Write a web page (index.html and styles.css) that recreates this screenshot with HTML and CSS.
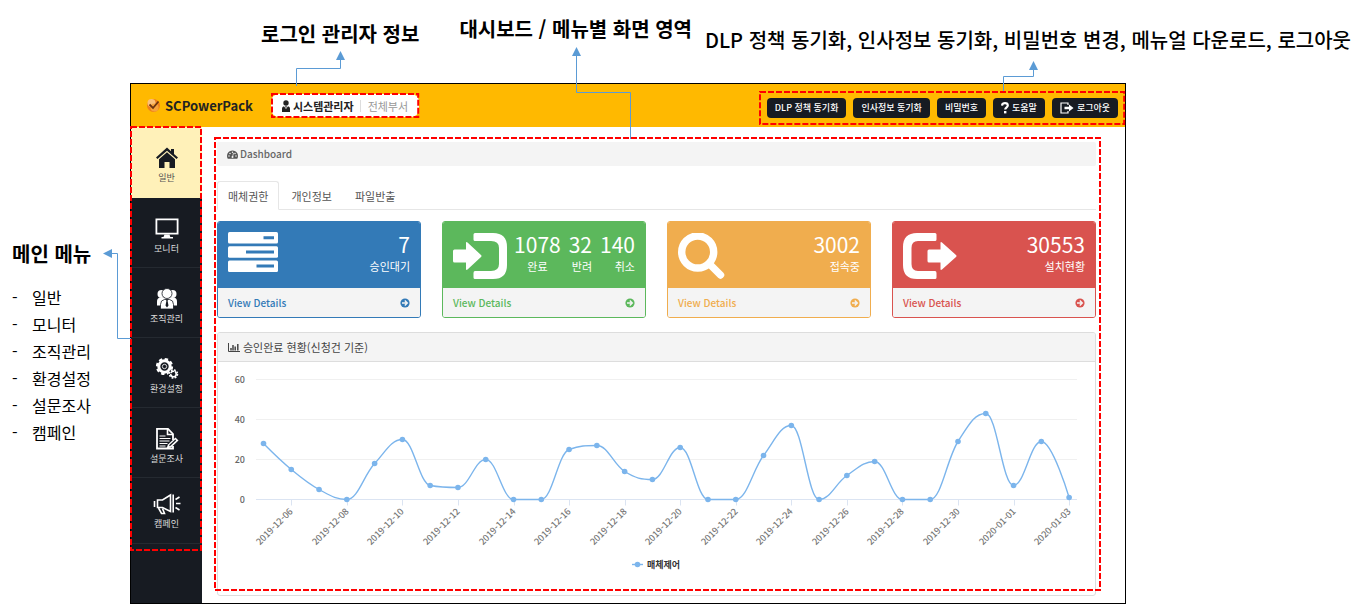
FILE: index.html
```html
<!DOCTYPE html>
<html lang="ko">
<head>
<meta charset="utf-8">
<meta name="viewport" content="width=device-width, initial-scale=1">
<title>SCPowerPack Dashboard</title>
<link rel="stylesheet" href="styles.css">
</head>
<body>
<div class="guide">
  <div class="captions">
    <h2 class="caption caption-login">로그인 관리자 정보</h2>
    <h2 class="caption caption-screen">대시보드 / 메뉴별 화면 영역</h2>
    <h2 class="caption caption-tools">DLP 정책 동기화, 인사정보 동기화, 비밀번호 변경, 메뉴얼 다운로드, 로그아웃</h2>
  </div>

  <aside class="notes">
    <h2 class="caption">메인 메뉴</h2>
    <ul class="note-list">
      <li>일반</li><li>모니터</li><li>조직관리</li><li>환경설정</li><li>설문조사</li><li>캠페인</li>
    </ul>
  </aside>

  <div class="app">
    <header class="topbar">
      <div class="brand">
        <svg class="brand-icon" viewBox="0 0 15 15" aria-hidden="true">
          <circle cx="7.5" cy="7.5" r="6.5" fill="#f07f1a"/>
          <circle cx="5.5" cy="5" r="4" fill="#fbc07a"/>
          <circle cx="8.5" cy="9.500" r="4" fill="#f6a33c"/>
          <path d="M3.5 6.5 7 10 12.500 3.500" fill="none" stroke="#6b3310" stroke-width="1.8"/>
        </svg>
        <span>SCPowerPack</span>
      </div>
      <div class="account">
        <svg class="account-icon" viewBox="0 0 8 12" aria-hidden="true"><circle cx="4" cy="3" r="2.7"/><path d="M0 12V8.500Q0 6.500 2 6.200L4 9 6 6.200Q8 6.500 8 8.500V12ZM3.300 6h1.400L4.300 8h-.6Z"/></svg>
        <strong>시스템관리자</strong>
        <span class="department">전체부서</span>
        <svg class="frame frame-account" aria-hidden="true"><rect/></svg>
        <svg class="link link-account" viewBox="0 0 54 36" aria-hidden="true"><path class="wire" d="M5.500 35V17.500H49.500V8"/><path class="tip" d="M49.500 0 54 9H45Z"/></svg>
      </div>
      <div class="tools">
        <button type="button">DLP 정책 동기화</button>
        <button type="button">인사정보 동기화</button>
        <button type="button">비밀번호</button>
        <button type="button"><svg width="8" height="12" viewBox="0 0 8 12" aria-hidden="true"><path d="M1 3.600C1.200 1.800 2.500 1.200 4 1.200c1.600 0 2.800.9 2.800 2.300C6.800 5.300 4.200 5.300 4.200 7.600" fill="none" stroke="#fff" stroke-width="2.200"/><rect x="3" y="9" width="2.400" height="2.400" fill="#fff"/></svg>도움말</button>
        <button type="button"><svg width="14" height="12" viewBox="0 0 14 12" aria-hidden="true"><path d="M8 3V1H1v10h7V9" fill="none" stroke="#fff" stroke-width="1.200"/><path d="M4.500 4.800H9V2.500L13.500 6 9 9.500V7.200H4.500Z" fill="#fff"/></svg>로그아웃</button>
        <svg class="frame frame-tools" aria-hidden="true"><rect/></svg>
        <svg class="link link-tools" viewBox="0 0 40 30" aria-hidden="true"><path class="wire" d="M5.500 30V15.500H35.500V8"/><path class="tip" d="M35.500 0 40 9H31Z"/></svg>
      </div>
    </header>

    <nav class="sidebar" aria-label="메인 메뉴">
      <a href="#general" class="nav-item active">
        <svg viewBox="0 0 24 24" aria-hidden="true"><path d="M12 1.500 1 11.500 2.500 13 12 4.800 21.500 13l1.500-1.500-4-3.600V3h-3v2.200Z"/><path d="M4 13.300 12 6.300l8 7V22h-5.500v-6h-5v6H4Z"/></svg>
        <span>일반</span></a>
      <a href="#monitor" class="nav-item">
        <svg viewBox="0 0 24 24" aria-hidden="true"><path fill-rule="evenodd" d="M.5 1.500h23v16h-23ZM2.300 3.300v12.400h19.400V3.300Z"/><path d="M9.500 17.500h5l.8 2.500H18v1.500H6.500V20h2Z"/></svg>
        <span>모니터</span></a>
      <a href="#organization" class="nav-item">
        <svg viewBox="0 0 24 24" aria-hidden="true"><circle cx="6.500" cy="7" r="4"/><circle cx="17.500" cy="7" r="4"/><path d="M2 18.500v-4q0-4 4-4h12q4 0 4 4v4Z"/><path d="M5.500 22v-4.500q0-4.500 4-5h5q4 .5 4 5V22Z" stroke="#171b22" stroke-width=".8"/><circle cx="12" cy="6.500" r="5" stroke="#171b22" stroke-width=".8"/><path d="M11 12.500h2l-.4 1.500.9 4.500-1.500 2-1.500-2 .9-4.500Z" fill="#171b22"/></svg>
        <span>조직관리</span></a>
      <a href="#settings" class="nav-item">
        <svg viewBox="0 0 24 24" aria-hidden="true"><circle cx="9.500" cy="9.500" r="5.700" fill="none" stroke="#fff" stroke-width="3"/><circle cx="9.500" cy="9.500" r="7.600" fill="none" stroke="#fff" stroke-width="2" stroke-dasharray="3.400 2.569"/><circle cx="9.500" cy="9.500" r="2.200" fill="none" stroke="#fff" stroke-width=".8"/><circle cx="18.500" cy="17" r="4.800" fill="#171b22"/><circle cx="18.500" cy="17" r="2.700" fill="none" stroke="#fff" stroke-width="1.600"/><circle cx="18.500" cy="17" r="4" fill="none" stroke="#fff" stroke-width="1.600" stroke-dasharray="1.800 1.342"/><path d="m15 16 3 1.500 1.500-3" fill="none" stroke="#171b22" stroke-width="1"/></svg>
        <span>환경설정</span></a>
      <a href="#survey" class="nav-item">
        <svg viewBox="0 0 24 24" aria-hidden="true"><path d="M18 13V7l-5-5.200H2V21.500h16V19" fill="none" stroke="#fff" stroke-width="1.800"/><path d="M12.500 2v5.500H18" fill="none" stroke="#fff" stroke-width="1.600"/><path d="M4.500 9h6M4.500 11.500h11M4.500 14h10M4.500 16.500h8M4.500 19h6" stroke="#fff" stroke-width="1.200"/><path d="M11.500 21.500 13 17.500l7.500-7 3 3-7.500 7Z"/><path d="m14.500 18.800 6.200-5.800" stroke="#171b22" stroke-width="1.300"/></svg>
        <span>설문조사</span></a>
      <a href="#campaign" class="nav-item last">
        <svg class="wide" viewBox="0 0 28 24" aria-hidden="true"><g fill="none" stroke="#fff" stroke-width="1.600"><path d="M4.500 8h5l8-5v16.500l-8-4h-5Z"/><path d="M1.500 9v6M5.500 16l3 5.500h3l-2-5M20.200 2.500v18M22.500 7.500l4-2.500M23 11.500h4.500M22.500 15.500l4 2.500"/></g></svg>
        <span>캠페인</span></a>
      <svg class="frame frame-menu" aria-hidden="true"><rect/></svg>
      <svg class="link link-menu" viewBox="0 0 28 92" aria-hidden="true"><path class="wire" d="M28 90.500H14.500V5.500H8"/><path class="tip" d="M0 5.500 9 1V10Z"/></svg>
    </nav>

    <main class="content">
      <h1 class="crumb">
        <svg width="11" height="9" viewBox="0 0 22 18" aria-hidden="true"><path fill="#555" d="M11 1a11 11 0 0 0-9.500 16.500h19A11 11 0 0 0 11 1Z"/><g fill="#f4f4f4"><circle cx="4" cy="12" r="1.500"/><circle cx="6" cy="6.800" r="1.500"/><circle cx="11" cy="4.500" r="1.500"/><circle cx="18" cy="12" r="1.500"/><circle cx="16" cy="6.800" r="1.500"/></g><path d="m13 6-2 8" stroke="#f4f4f4" stroke-width="1.500"/><circle cx="11" cy="14" r="2" fill="#f4f4f4"/></svg>
        Dashboard</h1>

      <div class="tabs" role="tablist">
        <button type="button" role="tab" class="tab selected" aria-selected="true">매체권한</button>
        <button type="button" role="tab" class="tab" aria-selected="false">개인정보</button>
        <button type="button" role="tab" class="tab" aria-selected="false">파일반출</button>
      </div>

      <div class="cards">
        <section class="card blue">
          <div class="card-top">
            <svg width="50" height="40" viewBox="0 0 50 40" aria-hidden="true"><g fill="#fff"><rect width="50" height="11.500" rx="1.500"/><rect y="14.200" width="50" height="11.500" rx="1.500"/><rect y="28.400" width="50" height="11.500" rx="1.500"/></g><path d="M35.500 5.700H46M18 19.900H46M28.500 34.100H46" stroke="#337ab7" stroke-width="3"/></svg>
            <dl class="stats"><div><dd>7</dd><dt>승인대기</dt></div></dl>
          </div>
          <a class="details" href="#pending">View Details<svg width="10" height="10" viewBox="0 0 10 10" aria-hidden="true"><circle cx="5" cy="5" r="4.600" fill="currentColor"/><path d="M2 5h5M4.800 2.500 7.300 5 4.800 7.500" fill="none" stroke="#f4f4f4" stroke-width="1.400"/></svg></a>
        </section>
        <section class="card green">
          <div class="card-top">
            <svg class="large" width="54" height="46" viewBox="0 0 54 46" fill="#fff" aria-hidden="true"><path d="M22 0H40Q54 0 54 14V32Q54 46 40 46H22Q20.500 46 20.500 44.500V40Q20.500 38 22 38H38Q46 38 46 31V15Q46 8 38 8H22Q20.500 8 20.500 6.500V1.500Q20.500 0 22 0Z"/><path d="M1.500 16.500H13V10Q13 8.500 14.500 9.500L28 22Q29 23 28 24L14.500 36.500Q13 37.500 13 36V29.500H1.500Q0 29.500 0 28V18Q0 16.500 1.500 16.500Z"/></svg>
            <dl class="stats"><div class="centered"><dd>1078</dd><dt>완료</dt></div><div><dd>32</dd><dt>반려</dt></div><div><dd>140</dd><dt>취소</dt></div></dl>
          </div>
          <a class="details" href="#completed">View Details<svg width="10" height="10" viewBox="0 0 10 10" aria-hidden="true"><circle cx="5" cy="5" r="4.600" fill="currentColor"/><path d="M2 5h5M4.800 2.500 7.300 5 4.800 7.500" fill="none" stroke="#f4f4f4" stroke-width="1.400"/></svg></a>
        </section>
        <section class="card orange">
          <div class="card-top">
            <svg class="large" width="47" height="46" viewBox="0 0 47 46" aria-hidden="true"><circle cx="19.700" cy="19" r="16" fill="none" stroke="#fff" stroke-width="7.400"/><path d="m31 30.500 11.500 11.500" stroke="#fff" stroke-width="7.400" stroke-linecap="round"/></svg>
            <dl class="stats"><div><dd>3002</dd><dt>접속중</dt></div></dl>
          </div>
          <a class="details" href="#connected">View Details<svg width="10" height="10" viewBox="0 0 10 10" aria-hidden="true"><circle cx="5" cy="5" r="4.600" fill="currentColor"/><path d="M2 5h5M4.800 2.500 7.300 5 4.800 7.500" fill="none" stroke="#f4f4f4" stroke-width="1.400"/></svg></a>
        </section>
        <section class="card red">
          <div class="card-top">
            <svg class="large" width="54" height="46" viewBox="0 0 54 46" fill="#fff" aria-hidden="true"><path d="M32 0H14Q0 0 0 14V32Q0 46 14 46H32Q33.500 46 33.500 44.500V40Q33.500 38 32 38H15Q8.500 38 8.500 31V15Q8.500 8 15 8H32Q33.500 8 33.500 6.500V1.500Q33.500 0 32 0Z"/><path d="M26 16.500H37.500V10Q37.500 8.500 39 9.500L53 22Q54 23 53 24L39 36.500Q37.500 37.500 37.500 36V29.500H26Q24.500 29.500 24.500 28V18Q24.500 16.500 26 16.500Z"/></svg>
            <dl class="stats"><div><dd>30553</dd><dt>설치현황</dt></div></dl>
          </div>
          <a class="details" href="#installed">View Details<svg width="10" height="10" viewBox="0 0 10 10" aria-hidden="true"><circle cx="5" cy="5" r="4.600" fill="currentColor"/><path d="M2 5h5M4.800 2.500 7.300 5 4.800 7.500" fill="none" stroke="#f4f4f4" stroke-width="1.400"/></svg></a>
        </section>
      </div>

      <section class="panel">
        <h2 class="panel-title">
          <svg width="12" height="9" viewBox="0 0 12 9" aria-hidden="true"><path d="M.5 0v8.500H12" fill="none" stroke="#444"/><path d="M3 7.500V5M5 7.500V2M7.200 7.500V3.500M9.800 7.500V1" stroke="#444" stroke-width="1.500"/></svg>
          승인완료 현황(신청건 기준)</h2>
        <svg class="chart" id="chart" viewBox="0 0 877 233" role="img" aria-label="승인완료 현황"></svg>
      </section>

      <svg class="frame frame-content" aria-hidden="true"><rect/></svg>
      <svg class="link link-content" viewBox="0 0 60 92" aria-hidden="true"><path class="wire" d="M58.500 92V45.500H4.500V8"/><path class="tip" d="M4.500 0 9 9H0Z"/></svg>
    </main>
  </div>
</div>
<script src="chart.js"></script>
</body>
</html>
```

FILE: styles.css
```css
* { box-sizing: border-box; }

body {
  margin: 0;
  background: #fff;
  color: #000;
  font-family: "Noto Sans CJK KR", "Noto Sans", sans-serif;
}

h1, h2, ul, dl, dd, dt { margin: 0; padding: 0; }
a { text-decoration: none; }
button { font-family: inherit; cursor: pointer; }

.guide {
  display: grid;
  grid-template-columns: 130px minmax(0, 1fr) 225px;
}

/* Captions round the application window */
.captions {
  grid-column: 1 / -1;
  display: flex;
  align-items: flex-start;
  padding: 15px 0 29px 261px;
}
.caption {
  font-size: 20px;
  line-height: 28px;
  font-weight: 700;
  white-space: nowrap;
}
.caption-login { padding-top: 5px; }
.caption-screen { margin-left: 40px; }
.caption-tools { margin-left: auto; padding-top: 11px; font-weight: 500; }

.notes { padding: 157px 0 0 12px; }
.note-list {
  margin-top: 16px;
  list-style: none;
  font-size: 16px;
  line-height: 27px;
}
.note-list li { display: flex; }
.note-list li::before { content: "-"; width: 20px; }

/* Application window */
.app {
  display: grid;
  grid-template-columns: 71px minmax(0, 1fr);
  grid-template-rows: auto 1fr;
  border: 1px solid #000;
}

.topbar {
  grid-column: 1 / -1;
  display: flex;
  align-items: center;
  height: 43px;
  padding: 0 7px 0 15px;
  background: #ffb900;
}
.brand {
  display: flex;
  align-items: center;
  gap: 4px;
  font-size: 13px;
  font-weight: 700;
  line-height: 20px;
  color: #222;
}
.brand-icon { width: 15px; height: 15px; }

.account {
  position: relative;
  display: flex;
  align-items: center;
  height: 23px;
  margin-left: 18px;
  padding: 0 11px;
  border-radius: 8px;
  background: #fff;
  font-size: 11px;
  line-height: 16px;
  color: #222;
}
.account-icon { width: 8px; height: 12px; margin-right: 3px; fill: #222; }
.account strong { font-weight: 700; }
.department {
  margin-left: 6px;
  padding-left: 7px;
  border-left: 1px solid #ddd;
  line-height: 12px;
  color: #999;
}

.tools {
  position: relative;
  display: flex;
  gap: 7px;
  margin-left: auto;
  padding-top: 4px;
}
.tools button {
  display: flex;
  align-items: center;
  gap: 3px;
  height: 20px;
  padding: 0 8px;
  border: 0;
  border-radius: 4px;
  background: #171b22;
  color: #fff;
  font-size: 9px;
  font-weight: 500;
  line-height: 16px;
  white-space: nowrap;
}

/* Sidebar */
.sidebar { position: relative; background: #171b22; }
.nav-item {
  display: flex;
  flex-direction: column;
  align-items: center;
  height: 70px;
  padding-top: 19px;
  border-bottom: 1px solid #252a31;
  color: #ddd;
  font-size: 9px;
  line-height: 16px;
}
.nav-item svg { width: 24px; height: 24px; fill: #fff; }
.nav-item .wide { width: 28px; }
.nav-item.active { height: 71px; background: #fff1b9; color: #555; border-bottom: 0; }
.nav-item.active svg { fill: #171b22; }
.nav-item.last { height: 66px; padding-top: 14px; }

/* Content */
.content {
  position: relative;
  display: flex;
  flex-direction: column;
  padding: 15px 29px 7px 15px;
}
.crumb {
  display: flex;
  align-items: center;
  gap: 2px;
  height: 24px;
  padding: 0 10px;
  border-radius: 2px;
  background: #f4f4f4;
  color: #666;
  font-size: 10px;
  font-weight: 500;
  line-height: 16px;
}

.tabs {
  display: flex;
  gap: 1px;
  margin-top: 15px;
  border-bottom: 1px solid #e6e6e6;
}
.tab {
  height: 29px;
  margin-bottom: -1px;
  padding: 0 10px;
  border: 1px solid transparent;
  border-radius: 3px 3px 0 0;
  background: none;
  color: #555;
  font-size: 11px;
  line-height: 16px;
}
.tab.selected { border-color: #e6e6e6; border-bottom-color: #fff; background: #fff; }

.cards {
  display: grid;
  grid-template-columns: repeat(4, minmax(0, 1fr));
  gap: 21px;
  margin-top: 11px;
}
.card { border: 1px solid; border-radius: 3px; overflow: hidden; }
.blue { color: #337ab7; }
.green { color: #5cb85c; }
.orange { color: #f0ad4e; }
.red { color: #d9534f; }
.card-top {
  display: flex;
  justify-content: space-between;
  height: 66px;
  padding: 10px;
  background: currentColor;
}
.card-top > svg { flex: none; }
.card-top .large { margin-top: 1px; }
.stats { display: flex; gap: 8px; text-align: right; color: #fff; }
.stats div { display: flex; flex-direction: column; gap: 2px; }
.stats dd { font-size: 21px; line-height: 24px; }
.stats dt { font-size: 11px; line-height: 16px; }
.stats .centered { text-align: center; }
.details {
  display: flex;
  align-items: center;
  justify-content: space-between;
  height: 29px;
  padding: 0 10px;
  background: #f4f4f4;
  color: inherit;
  font-size: 10px;
  font-weight: 500;
  line-height: 16px;
}

.panel {
  margin-top: 14px;
  border: 1px solid #ddd;
  border-radius: 3px;
  overflow: hidden;
}
.panel-title {
  display: flex;
  align-items: center;
  gap: 3px;
  height: 29px;
  padding: 0 10px;
  border-bottom: 1px solid #ddd;
  background: #f4f4f4;
  color: #444;
  font-size: 11px;
  font-weight: 400;
  line-height: 16px;
}

/* Chart */
.chart { display: block; width: 100%; height: auto; }
.grid-line { stroke: #f0f0f0; stroke-width: 1; }
.axis-line { stroke: #dbe4f2; stroke-width: 1; }
.axis-text { fill: #666; font-size: 9px; font-weight: 500; }
.date-text { fill: #777; font-size: 9px; font-weight: 500; }
.series { fill: none; stroke: #7cb5ec; stroke-width: 1.4; }
.dot { fill: #7cb5ec; }
.legend-text { fill: #333; font-size: 9px; font-weight: 700; }

/* Callout frames and connectors */
.frame {
  position: absolute;
  overflow: visible;
  pointer-events: none;
}
.frame rect {
  x: 1px;
  y: 1px;
  width: calc(100% - 2px);
  height: calc(100% - 2px);
  fill: none;
  stroke: #f00;
  stroke-width: 2;
  stroke-dasharray: 6 2;
}
.frame-account { left: 0; top: -1px; width: 100%; height: 25px; }
.frame-tools { left: -8px; top: -3px; width: calc(100% + 15px); height: 34px; }
.frame-menu { left: -1px; top: -1px; width: calc(100% + 1px); height: 425px; }
.frame-content { left: 12px; top: 10px; width: calc(100% - 36px); height: calc(100% - 22px); }

.link { position: absolute; pointer-events: none; }
.wire { fill: none; stroke: #5b9bd5; stroke-width: 1; }
.tip { fill: #5b9bd5; }
.link-account { left: 20px; bottom: 30px; width: 54px; height: 36px; }
.link-tools { right: 80px; bottom: 27px; width: 40px; height: 30px; }
.link-content { left: 370px; top: -80px; width: 60px; height: 92px; }
.link-menu { left: -28px; top: 121px; width: 28px; height: 92px; }
```

FILE: chart.js
```js
(function () {
  var values = [28, 15, 5, 0, 18, 30, 7, 6, 20, 0, 0, 25, 27, 14, 10,
    26, 0, 0, 22, 37, 0, 12, 19, 0, 0, 29, 43, 7, 29, 1];
  var chart = document.getElementById('chart');
  var left = 38, right = 859, base = 137.5;
  var first = 45.5, step = 27.78;

  function add(name, attrs, text) {
    var el = document.createElementNS('http://www.w3.org/2000/svg', name);
    Object.keys(attrs).forEach(function (key) { el.setAttribute(key, attrs[key]); });
    if (text) { el.textContent = text; }
    chart.appendChild(el);
  }

  [0, 20, 40, 60].forEach(function (value) {
    var y = base - value * 2;
    add('path', { d: 'M' + left + ' ' + y + 'H' + right, 'class': value ? 'grid-line' : 'axis-line' });
    add('text', { x: 27, y: y + 3, 'text-anchor': 'end', 'class': 'axis-text' }, String(value));
  });

  var points = values.map(function (value, i) {
    return { x: first + i * step, y: base - value * 2 };
  });

  points.forEach(function (p, i) {
    if (i % 2 === 0) { return; }
    var x = Math.round(p.x) + 0.5;
    var label = new Date(Date.UTC(2019, 11, 5 + i)).toISOString().slice(0, 10);
    add('path', { d: 'M' + x + ' ' + base + 'v6', 'class': 'axis-line' });
    add('text', {
      transform: 'translate(' + (x + 2) + ' 150) rotate(-45)',
      'text-anchor': 'end', 'class': 'date-text'
    }, label);
  });

  // Smooth spline whose control points never overshoot the neighbouring values.
  var d = 'M' + points[0].x + ' ' + points[0].y;
  var out = points[0];
  for (var i = 1; i < points.length; i++) {
    var a = points[i - 1], p = points[i], n = points[i + 1];
    var inner = p, next = p;
    if (n) {
      var lx = (1.5 * p.x + a.x) / 2.5, ly = (1.5 * p.y + a.y) / 2.5;
      var rx = (1.5 * p.x + n.x) / 2.5, ry = (1.5 * p.y + n.y) / 2.5;
      var fix = (ry - ly) * (rx - p.x) / (rx - lx) + p.y - ry;
      ly += fix;
      ry += fix;
      if (ly > a.y && ly > p.y) { ly = Math.max(a.y, p.y); ry = 2 * p.y - ly; }
      else if (ly < a.y && ly < p.y) { ly = Math.min(a.y, p.y); ry = 2 * p.y - ly; }
      if (ry > n.y && ry > p.y) { ry = Math.max(n.y, p.y); ly = 2 * p.y - ry; }
      else if (ry < n.y && ry < p.y) { ry = Math.min(n.y, p.y); ly = 2 * p.y - ry; }
      inner = { x: lx, y: ly };
      next = { x: rx, y: ry };
    }
    d += 'C' + [out.x, out.y, inner.x, inner.y, p.x, p.y].join(' ');
    out = next;
  }
  add('path', { d: d, 'class': 'series' });
  points.forEach(function (p) { add('circle', { cx: p.x, cy: p.y, r: 2.8, 'class': 'dot' }); });

  add('path', { d: 'M414 202.500H425', 'class': 'series' });
  add('circle', { cx: 419.5, cy: 202.5, r: 2.8, 'class': 'dot' });
  add('text', { x: 429, y: 206, 'class': 'legend-text' }, '매체제어');
})();
```
